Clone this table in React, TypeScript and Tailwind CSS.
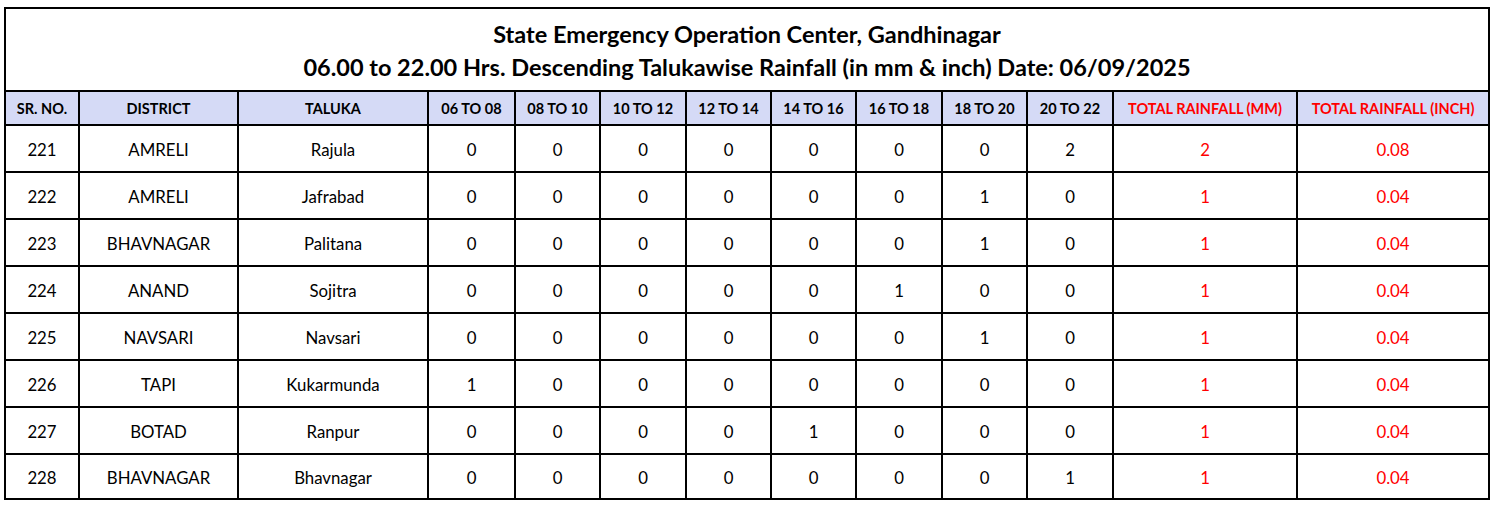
const cols = [74, 159, 190, 87, 85, 86, 85, 85, 86, 85, 86, 184, 192];

const headers = [
  "SR. NO.",
  "DISTRICT",
  "TALUKA",
  "06 TO 08",
  "08 TO 10",
  "10 TO 12",
  "12 TO 14",
  "14 TO 16",
  "16 TO 18",
  "18 TO 20",
  "20 TO 22",
];

type Row = {
  sr: number;
  district: string;
  taluka: string;
  slots: number[];
  mm: number;
  inch: string;
};

const rows: Row[] = [
  { sr: 221, district: "AMRELI", taluka: "Rajula", slots: [0, 0, 0, 0, 0, 0, 0, 2], mm: 2, inch: "0.08" },
  { sr: 222, district: "AMRELI", taluka: "Jafrabad", slots: [0, 0, 0, 0, 0, 0, 1, 0], mm: 1, inch: "0.04" },
  { sr: 223, district: "BHAVNAGAR", taluka: "Palitana", slots: [0, 0, 0, 0, 0, 0, 1, 0], mm: 1, inch: "0.04" },
  { sr: 224, district: "ANAND", taluka: "Sojitra", slots: [0, 0, 0, 0, 0, 1, 0, 0], mm: 1, inch: "0.04" },
  { sr: 225, district: "NAVSARI", taluka: "Navsari", slots: [0, 0, 0, 0, 0, 0, 1, 0], mm: 1, inch: "0.04" },
  { sr: 226, district: "TAPI", taluka: "Kukarmunda", slots: [1, 0, 0, 0, 0, 0, 0, 0], mm: 1, inch: "0.04" },
  { sr: 227, district: "BOTAD", taluka: "Ranpur", slots: [0, 0, 0, 0, 1, 0, 0, 0], mm: 1, inch: "0.04" },
  { sr: 228, district: "BHAVNAGAR", taluka: "Bhavnagar", slots: [0, 0, 0, 0, 0, 0, 0, 1], mm: 1, inch: "0.04" },
];

export default function App() {
  return (
    <div className="min-h-[506px] bg-white pl-[4px] pt-[7px] font-['Lato','Noto_Sans',sans-serif] text-black">
      <table className="w-[1486px] table-fixed border-collapse border-2 border-black">
        <colgroup>
          {cols.map((w, i) => (
            <col key={i} style={{ width: w }} />
          ))}
        </colgroup>
        <thead>
          <tr>
            <td colSpan={13} className="h-[83px] border-2 border-black pt-[2px] text-center text-[23.5px] font-bold leading-[33px]">
              <div>State Emergency Operation Center, Gandhinagar</div>
              <div>06.00 to 22.00 Hrs. Descending Talukawise Rainfall (in mm &amp; inch) Date: 06/09/2025</div>
            </td>
          </tr>
          <tr className="bg-[#d5daf6]">
            {headers.map((h) => (
              <th key={h} className="h-[34px] border-2 border-black p-0 pt-[1px] text-center text-[14.5px] font-bold">
                {h}
              </th>
            ))}
            <th className="h-[34px] border-2 border-black p-0 pt-[1px] text-center text-[14.5px] font-bold text-[#ff0000]">
              TOTAL RAINFALL (MM)
            </th>
            <th className="h-[34px] border-2 border-black p-0 pt-[1px] text-center text-[14.5px] font-bold text-[#ff0000]">
              TOTAL RAINFALL (INCH)
            </th>
          </tr>
        </thead>
        <tbody>
          {rows.map((r, idx) => (
            <tr key={r.sr} className={idx === rows.length - 1 ? "h-[45px] text-[16.8px]" : "h-[47px] text-[16.8px]"}>
              <td className="border-2 border-black p-0 pt-[3px] text-center">{r.sr}</td>
              <td className="border-2 border-black p-0 pt-[3px] text-center">{r.district}</td>
              <td className="border-2 border-black p-0 pt-[3px] text-center">{r.taluka}</td>
              {r.slots.map((v, i) => (
                <td key={i} className="border-2 border-black p-0 pt-[3px] text-center">
                  {v}
                </td>
              ))}
              <td className="border-2 border-black p-0 pt-[3px] text-center text-[#ff0000]">{r.mm}</td>
              <td className="border-2 border-black p-0 pt-[3px] text-center text-[#ff0000]">{r.inch}</td>
            </tr>
          ))}
        </tbody>
      </table>
    </div>
  );
}
